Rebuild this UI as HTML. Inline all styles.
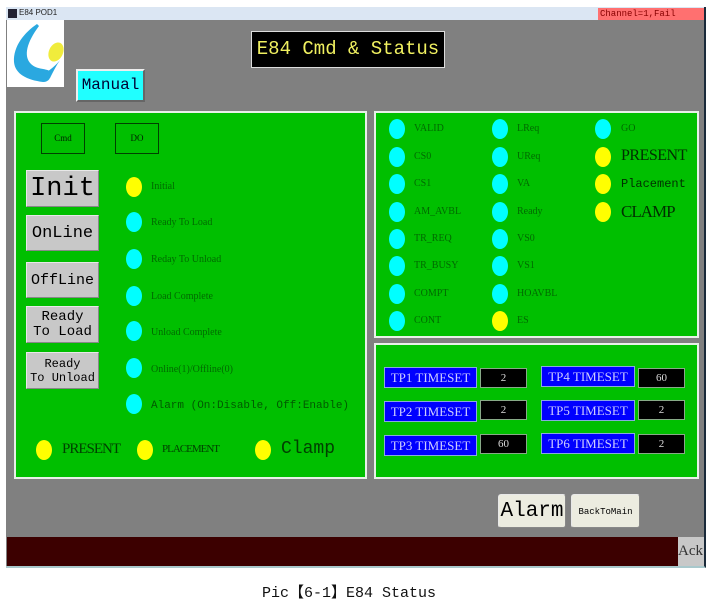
<!DOCTYPE html>
<html><head><meta charset="utf-8"><style>
*{margin:0;padding:0;box-sizing:border-box}
body{width:714px;height:603px;background:#fff;position:relative;overflow:hidden;font-family:"Liberation Serif",serif}
.a{position:absolute}
.win{left:6px;top:7px;width:700px;height:561px;background:#808080;border-right:2px solid #1a2a3a;border-bottom:2px solid #a8c8cc}
.tb{left:6px;top:7px;width:698px;height:13px;background:#dbe6f3}
.panel{background:#00bf00;border:2px solid #e8f0e8}
.led{position:absolute;width:16px;height:20px;border-radius:50%;background:#00ffff}
.y{background:#ffff00}
.lbl{position:absolute;font-size:10px;color:#006a00;white-space:nowrap;font-family:"Liberation Serif",serif}
.btn{position:absolute;background:#c8c8c8;border:1px solid #e8e8e8;border-right-color:#888;border-bottom-color:#888;font-family:"Liberation Mono",monospace;color:#000;text-align:center;line-height:1;overflow:hidden;white-space:nowrap}
.tp{position:absolute;background:#0000ff;color:#ccf;border:1px solid #8ad;font-size:13px;text-align:center;line-height:19px;font-family:"Liberation Serif",serif}
.tv{position:absolute;background:#000;color:#ddd;border:1px solid #8a8;font-size:11px;text-align:center;line-height:18px}
</style></head><body>
<div class="a win"></div>
<div class="a tb"></div>
<div class="a" style="left:8px;top:9px;width:9px;height:9px;background:#223"></div>
<div class="a" style="left:19px;top:8px;font-family:'Liberation Sans',sans-serif;font-size:8px;color:#222">E84 POD1</div>
<div class="a" style="left:598px;top:8px;width:106px;height:12px;background:#ff7070;font-family:'Liberation Mono',monospace;font-size:9px;color:#800;line-height:12px;padding-left:2px">Channel=1,Fail</div>
<!-- logo -->
<div class="a" style="left:7px;top:20px;width:57px;height:67px;background:#fff">
<svg width="57" height="67" viewBox="0 0 57 67">
<path d="M30 4 C18 12 6 26 7 42 C8 54 20 60 36 62 C42 62 44 58 44 52 C40 48 30 50 24 44 C16 36 20 22 32 6 Z" fill="#2aa8e0"/>
<path d="M36 54 C44 50 50 44 53 40 C49 46 46 52 43 58 Z" fill="#2aa8e0"/>
<ellipse cx="49" cy="32" rx="7" ry="10" transform="rotate(25 49 32)" fill="#f0ec3c"/>
</svg></div>
<div class="a" style="left:251px;top:31px;width:194px;height:37px;background:#000;border:1px solid #ddd;color:#f0f060;font-family:'Liberation Mono',monospace;font-size:19px;line-height:35px;text-align:center">E84 Cmd &amp; Status</div>
<div class="btn" style="left:76px;top:69px;width:69px;height:33px;background:#20ffff;border:2px solid #eee;border-right-color:#666;border-bottom-color:#666;font-size:16px;line-height:29px;color:#003">Manual</div>

<!-- left panel -->
<div class="a panel" style="left:14px;top:111px;width:353px;height:368px"></div>
<div class="a" style="left:41px;top:123px;width:44px;height:31px;border:1px solid #004000;font-size:9px;text-align:center;line-height:29px;color:#002000">Cmd</div>
<div class="a" style="left:115px;top:123px;width:44px;height:31px;border:1px solid #004000;font-size:9px;text-align:center;line-height:29px;color:#002000">DO</div>
<div class="btn" style="left:26px;top:170px;width:73px;height:37px;font-size:27px;line-height:37px">Init</div>
<div class="btn" style="left:26px;top:215px;width:73px;height:36px;font-size:17px;line-height:36px">OnLine</div>
<div class="btn" style="left:26px;top:262px;width:73px;height:36px;font-size:15px;line-height:36px">OffLine</div>
<div class="btn" style="left:26px;top:306px;width:73px;height:37px;font-size:14px;line-height:15px;padding-top:3px">Ready<br>To Load</div>
<div class="btn" style="left:26px;top:352px;width:73px;height:37px;font-size:12px;line-height:14px;padding-top:4px">Ready<br>To Unload</div>
<div class="led y" style="left:126px;top:177px"></div><div class="lbl" style="left:151px;top:181px">Initial</div>
<div class="led" style="left:126px;top:212px"></div><div class="lbl" style="left:151px;top:217px">Ready To Load</div>
<div class="led" style="left:126px;top:249px"></div><div class="lbl" style="left:151px;top:254px">Reday To Unload</div>
<div class="led" style="left:126px;top:286px"></div><div class="lbl" style="left:151px;top:291px">Load Complete</div>
<div class="led" style="left:126px;top:321px"></div><div class="lbl" style="left:151px;top:327px">Unload Complete</div>
<div class="led" style="left:126px;top:358px"></div><div class="lbl" style="left:151px;top:364px">Online(1)/Offline(0)</div>
<div class="led" style="left:126px;top:394px"></div><div class="lbl" style="left:151px;top:400px;font-size:11px;font-family:'Liberation Mono',monospace;color:#005a00">Alarm (On:Disable, Off:Enable)</div>
<div class="led y" style="left:36px;top:440px"></div><div class="lbl" style="left:62px;top:441px;font-size:15px;color:#004000;letter-spacing:-1px">PRESENT</div>
<div class="led y" style="left:137px;top:440px"></div><div class="lbl" style="left:162px;top:443px;font-size:11px;color:#004000;letter-spacing:-1px">PLACEMENT</div>
<div class="led y" style="left:255px;top:440px"></div><div class="lbl" style="left:281px;top:439px;font-size:18px;color:#004000;font-family:'Liberation Mono',monospace">Clamp</div>

<!-- right top panel -->
<div class="a panel" style="left:374px;top:111px;width:325px;height:227px"></div>
<div class="led" style="left:389px;top:119px"></div><div class="lbl" style="left:414px;top:123px">VALID</div>
<div class="led" style="left:389px;top:147px"></div><div class="lbl" style="left:414px;top:151px">CS0</div>
<div class="led" style="left:389px;top:174px"></div><div class="lbl" style="left:414px;top:178px">CS1</div>
<div class="led" style="left:389px;top:202px"></div><div class="lbl" style="left:414px;top:206px">AM_AVBL</div>
<div class="led" style="left:389px;top:229px"></div><div class="lbl" style="left:414px;top:233px">TR_REQ</div>
<div class="led" style="left:389px;top:256px"></div><div class="lbl" style="left:414px;top:260px">TR_BUSY</div>
<div class="led" style="left:389px;top:284px"></div><div class="lbl" style="left:414px;top:288px">COMPT</div>
<div class="led" style="left:389px;top:311px"></div><div class="lbl" style="left:414px;top:315px">CONT</div>
<div class="led" style="left:492px;top:119px"></div><div class="lbl" style="left:517px;top:123px">LReq</div>
<div class="led" style="left:492px;top:147px"></div><div class="lbl" style="left:517px;top:151px">UReq</div>
<div class="led" style="left:492px;top:174px"></div><div class="lbl" style="left:517px;top:178px">VA</div>
<div class="led" style="left:492px;top:202px"></div><div class="lbl" style="left:517px;top:206px">Ready</div>
<div class="led" style="left:492px;top:229px"></div><div class="lbl" style="left:517px;top:233px">VS0</div>
<div class="led" style="left:492px;top:256px"></div><div class="lbl" style="left:517px;top:260px">VS1</div>
<div class="led" style="left:492px;top:284px"></div><div class="lbl" style="left:517px;top:288px">HOAVBL</div>
<div class="led y" style="left:492px;top:311px"></div><div class="lbl" style="left:517px;top:315px">ES</div>
<div class="led" style="left:595px;top:119px"></div><div class="lbl" style="left:621px;top:123px">GO</div>
<div class="led y" style="left:595px;top:147px"></div><div class="lbl" style="left:621px;top:147px;font-size:16px;color:#003000;letter-spacing:-0.5px">PRESENT</div>
<div class="led y" style="left:595px;top:174px"></div><div class="lbl" style="left:621px;top:177px;font-size:12px;color:#003000;font-family:'Liberation Mono',monospace">Placement</div>
<div class="led y" style="left:595px;top:202px"></div><div class="lbl" style="left:621px;top:202px;font-size:17px;color:#003000;letter-spacing:-1px">CLAMP</div>

<!-- right bottom panel -->
<div class="a panel" style="left:374px;top:343px;width:325px;height:136px"></div>
<div class="tp" style="left:384px;top:367px;width:93px;height:21px">TP1 TIMESET</div><div class="tv" style="left:480px;top:368px;width:47px;height:20px">2</div>
<div class="tp" style="left:384px;top:401px;width:93px;height:21px">TP2 TIMESET</div><div class="tv" style="left:480px;top:400px;width:47px;height:20px">2</div>
<div class="tp" style="left:384px;top:435px;width:93px;height:21px">TP3 TIMESET</div><div class="tv" style="left:480px;top:434px;width:47px;height:20px">60</div>
<div class="tp" style="left:541px;top:366px;width:94px;height:21px">TP4 TIMESET</div><div class="tv" style="left:638px;top:368px;width:47px;height:20px">60</div>
<div class="tp" style="left:541px;top:400px;width:94px;height:21px">TP5 TIMESET</div><div class="tv" style="left:638px;top:400px;width:47px;height:20px">2</div>
<div class="tp" style="left:541px;top:433px;width:94px;height:21px">TP6 TIMESET</div><div class="tv" style="left:638px;top:434px;width:47px;height:20px">2</div>

<div class="btn" style="left:498px;top:494px;width:68px;height:34px;background:#ecece0;border-radius:3px;font-size:21px;line-height:34px">Alarm</div>
<div class="btn" style="left:571px;top:494px;width:69px;height:34px;background:#ecece0;border-radius:3px;font-size:9px;line-height:34px">BackToMain</div>

<div class="a" style="left:7px;top:537px;width:671px;height:29px;background:#3c0000"></div>
<div class="a" style="left:678px;top:537px;width:26px;height:29px;background:#c8c8c8;font-size:15px;line-height:29px;color:#333">Ack</div>

<div class="a" style="left:262px;top:581px;font-size:15px;color:#111;font-family:'Liberation Mono','Noto Sans CJK SC',monospace;white-space:nowrap">Pic【6-1】E84 Status</div>
</body></html>
